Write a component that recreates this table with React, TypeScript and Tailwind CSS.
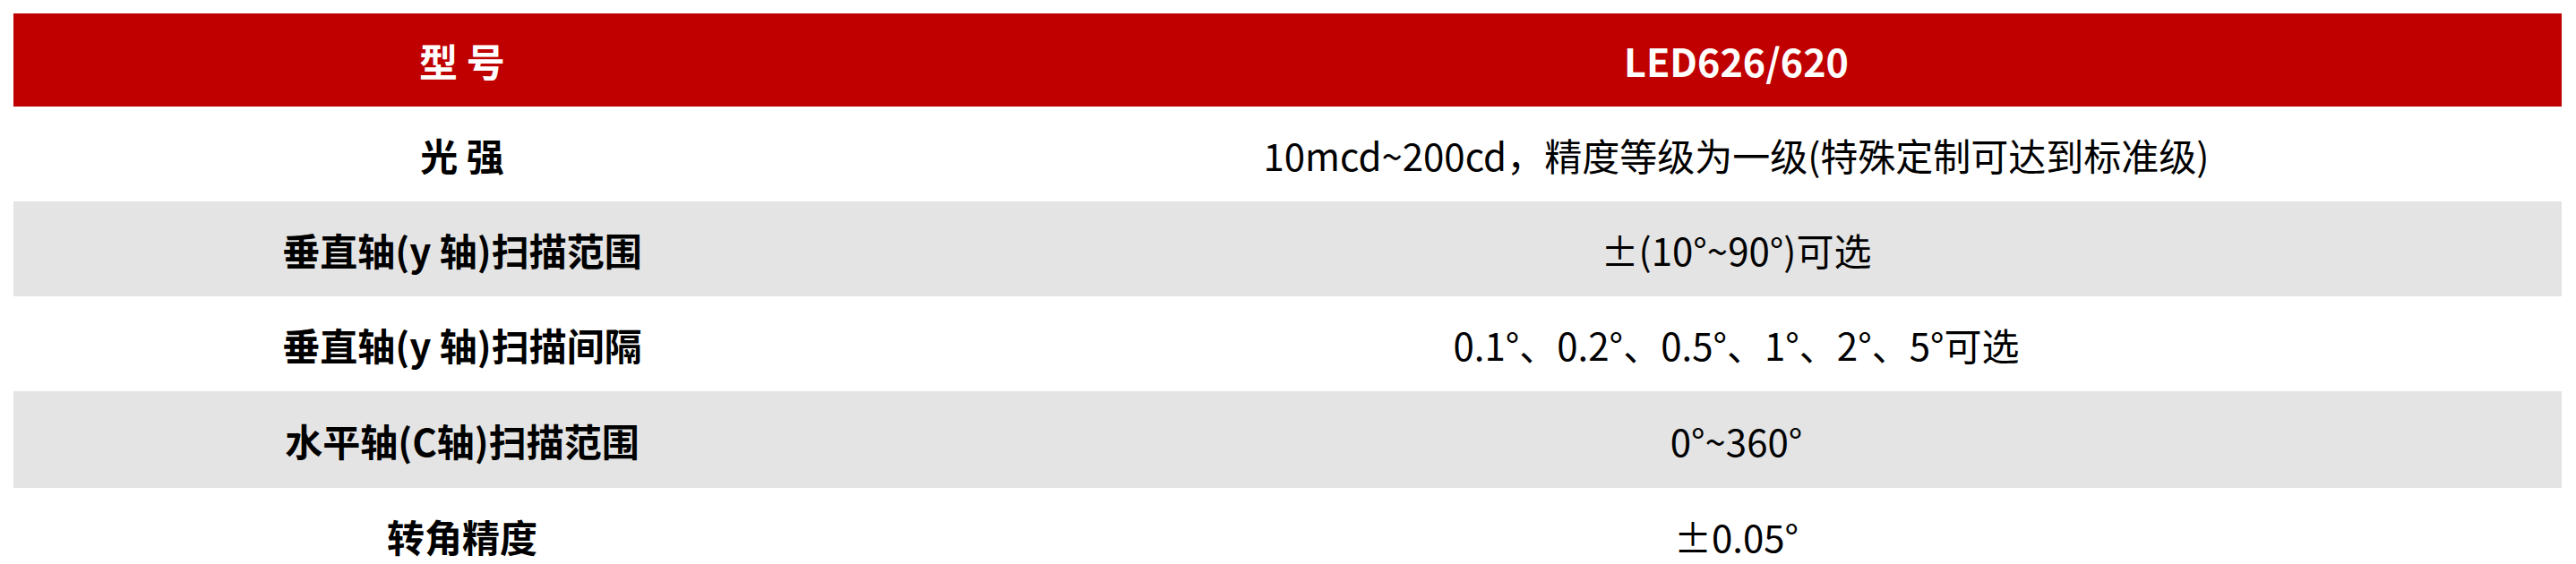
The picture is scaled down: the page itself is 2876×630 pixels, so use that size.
import React from "react";

const rows: { label: string; value: string; grey: boolean; h: string }[] = [
  { label: "光 强", value: "10mcd~200cd，精度等级为一级(特殊定制可达到标准级)", grey: false, h: "h-[106px]" },
  { label: "垂直轴(y 轴)扫描范围", value: "±(10°~90°)可选", grey: true, h: "h-[106px]" },
  { label: "垂直轴(y 轴)扫描间隔", value: "0.1°、0.2°、0.5°、1°、2°、5°可选", grey: false, h: "h-[106px]" },
  { label: "水平轴(C轴)扫描范围", value: "0°~360°", grey: true, h: "h-[108px]" },
  { label: "转角精度", value: "±0.05°", grey: false, h: "h-[106px]" },
];

export default function App() {
  return (
    <div
      className="w-[2876px] h-[630px] overflow-hidden bg-white pl-[15px] pr-[16px] pt-[15px] text-black"
      style={{ fontFamily: '"Noto Sans CJK SC", "Noto Sans", sans-serif' }}
    >
      <div className="flex flex-col w-full">
        <div className="flex h-[104px] bg-[#c00000] text-white font-bold text-[43px]">
          <div className="w-[1002px] flex items-center justify-center">型 号</div>
          <div className="flex-1 flex items-center justify-center">LED626/620</div>
        </div>
        {rows.map((r, i) => (
          <div key={i} className={`flex ${r.h} ${r.grey ? "bg-[#e4e4e4]" : "bg-white"} text-[42px]`}>
            <div className="w-[1002px] flex items-center justify-center font-bold">{r.label}</div>
            <div className="flex-1 flex items-center justify-center">{r.value}</div>
          </div>
        ))}
      </div>
    </div>
  );
}
